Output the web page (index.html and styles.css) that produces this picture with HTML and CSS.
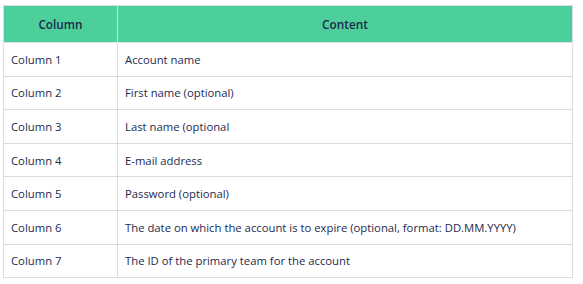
FILE: index.html
```html
<!DOCTYPE html>
<html lang="en">
<head>
  <meta charset="UTF-8">
  <title>Import columns</title>
  <link rel="stylesheet" href="styles.css">
</head>
<body>
  <table class="columns-table">
    <thead>
      <tr>
        <th class="col-name">Column</th>
        <th>Content</th>
      </tr>
    </thead>
    <tbody>
      <tr><td>Column 1</td><td>Account name</td></tr>
      <tr><td>Column 2</td><td>First name (optional)</td></tr>
      <tr><td>Column 3</td><td>Last name (optional</td></tr>
      <tr><td>Column 4</td><td>E-mail address</td></tr>
      <tr><td>Column 5</td><td>Password (optional)</td></tr>
      <tr><td>Column 6</td><td>The date on which the account is to expire (optional, format: DD.MM.YYYY)</td></tr>
      <tr><td>Column 7</td><td>The ID of the primary team for the account</td></tr>
    </tbody>
  </table>
</body>
</html>
```

FILE: styles.css
```css
* {
  margin: 0;
  padding: 0;
  box-sizing: border-box;
}

body {
  font-family: 'Open Sans', sans-serif;
  font-size: 11.3px;
  color: #232a4f;
  background: #ffffff;
  padding: 5px 10px 0 3px;
}

.columns-table {
  width: 570px;
  border-collapse: collapse;
  border: 1px solid #dcdcdc;
}

.columns-table th {
  background-color: #4ccf9b;
  font-weight: 600;
  font-size: 11.8px;
  color: #1f2a4a;
  height: 37px;
  text-align: center;
  border: 1px solid #dcdcdc;
  border-top: none;
  border-bottom-color: #e4e4e4;
}

.columns-table th.col-name {
  width: 114px;
}

.columns-table td {
  height: 33.6px;
  padding: 0 6px 0 7px;
  border: 1px solid #dcdcdc;
  vertical-align: middle;
}
```
